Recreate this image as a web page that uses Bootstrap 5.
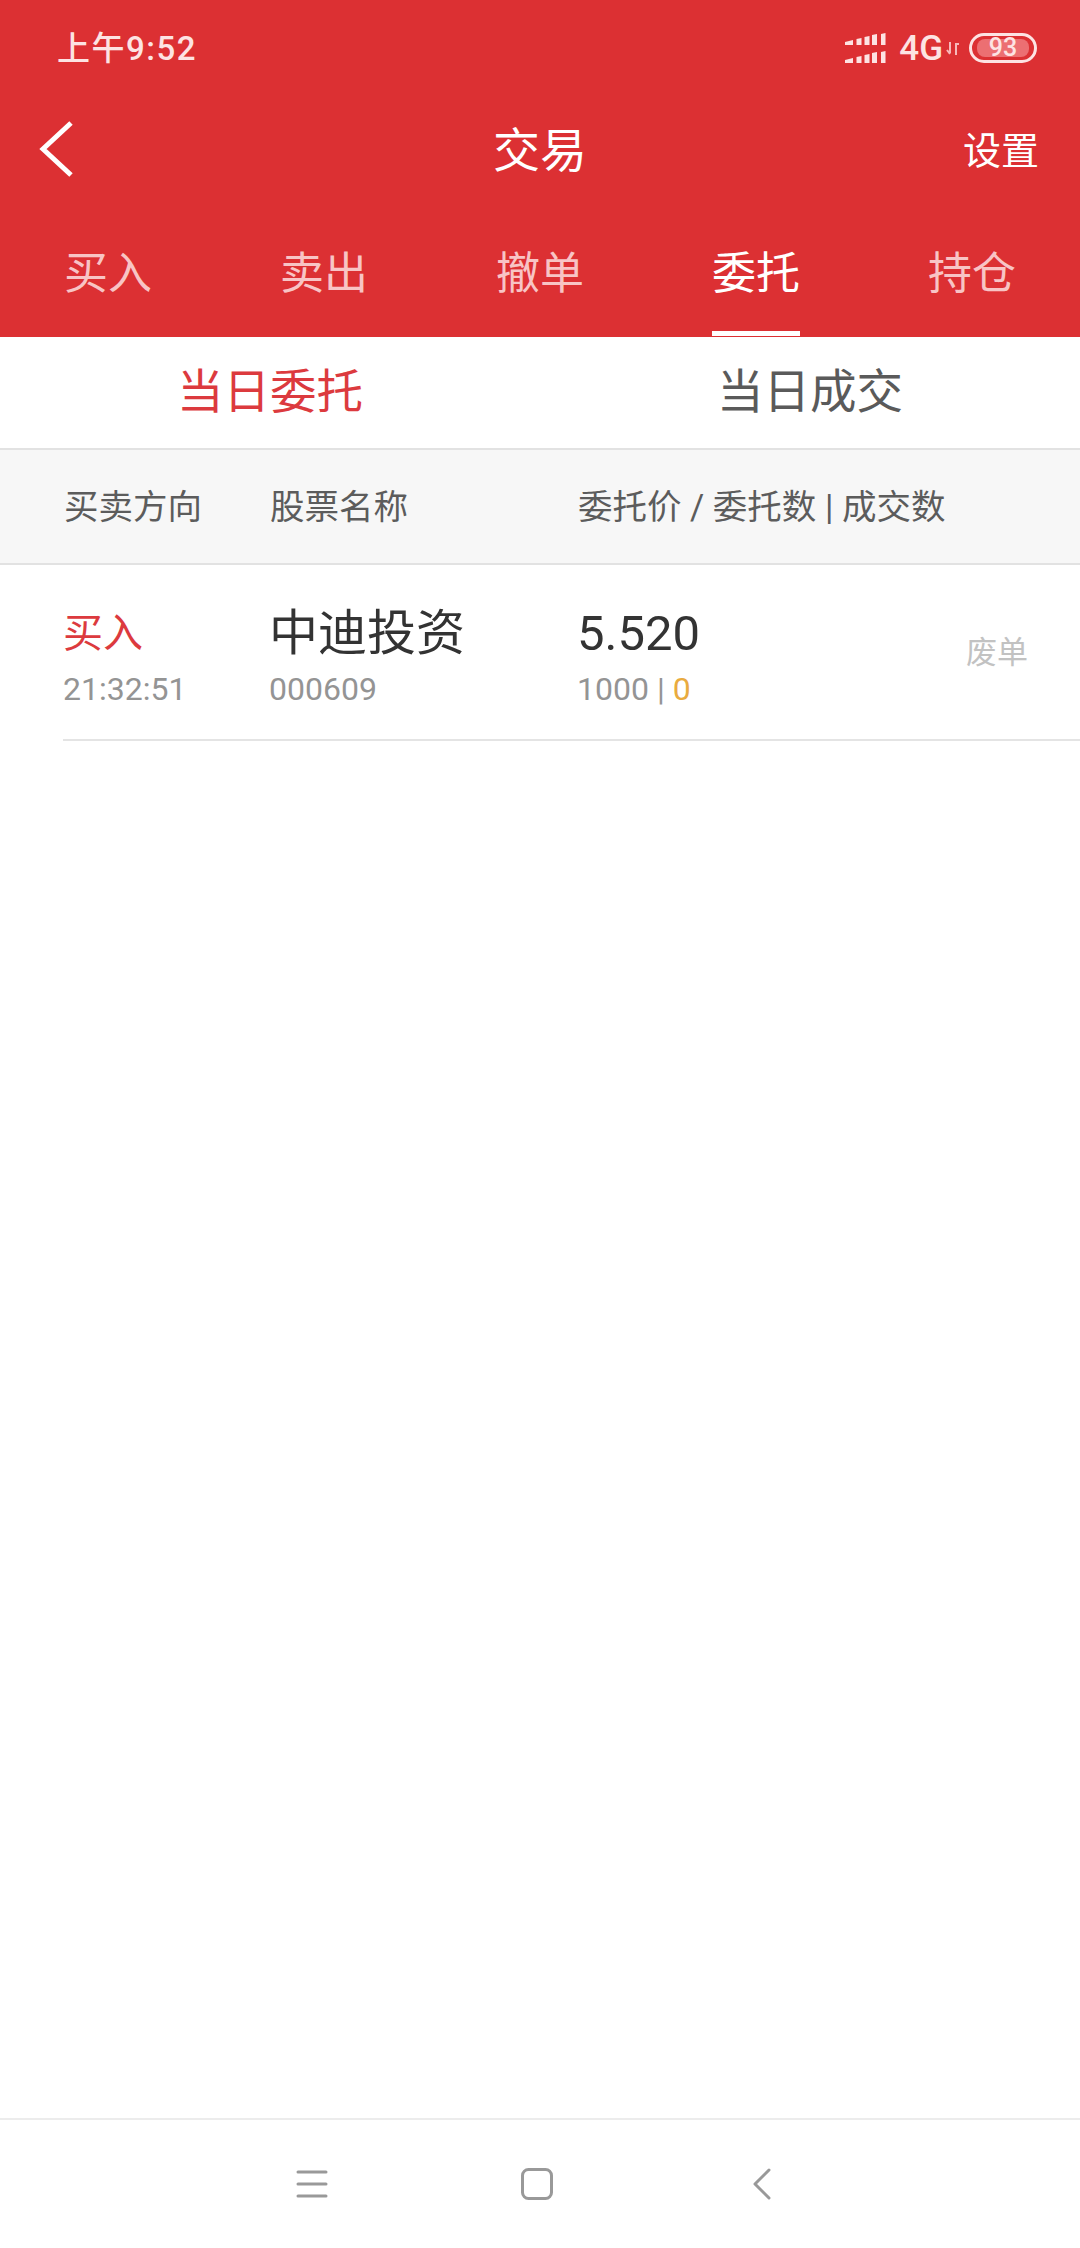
<!DOCTYPE html>
<html lang="zh-CN">
<head>
    <meta charset="UTF-8">
    <meta name="viewport" content="width=device-width, initial-scale=1.0">
    <title>交易</title>
    <link href="https://cdn.jsdelivr.net/npm/bootstrap@5.3.0/dist/css/bootstrap.min.css" rel="stylesheet">
    <style>
        body {
            font-family: Roboto, "Noto Sans CJK SC", sans-serif;
            background-color: #fff;
        }
        .app-page {
            height: 2248px;
        }
        .top-red {
            background-color: #dc3033;
            color: #fff;
            height: 337px;
        }
        .status-bar {
            height: 96px;
            padding: 0 43px 0 57px;
            color: #fde3e3;
        }
        .status-time {
            font-size: 33px;
            font-weight: 500;
            line-height: 1;
            letter-spacing: 1.5px;
        }
        .status-net {
            font-size: 35px;
            font-weight: 500;
            line-height: 1;
            margin: 0 3px 0 12px;
        }
        .battery-box {
            width: 68px;
            height: 30px;
            border: 3px solid #fde3e3;
            border-radius: 15px;
            padding: 3px 5px;
            margin-left: 9px;
        }
        .battery-fill {
            background-color: #ec6f72;
            border-radius: 8px;
            font-size: 25px;
            font-weight: 500;
            line-height: 18px;
            height: 18px;
        }
        .title-bar {
            height: 105px;
            padding: 4px 41px 0;
        }
        .back-icon {
            left: 39px;
            top: 25px;
        }
        .title-text {
            font-size: 47px;
            line-height: 1;
        }
        .setting-text {
            font-size: 38px;
            line-height: 1;
            right: 41px;
        }
        .trade-tabs .nav-link {
            height: 136px;
            padding: 0;
            font-size: 44px;
            line-height: 1;
            color: #f8c4c5;
        }
        .trade-tabs .nav-link span {
            display: inline-block;
            height: 135px;
            padding-top: 51px;
        }
        .trade-tabs .nav-link.active {
            color: #fff;
        }
        .trade-tabs .nav-link.active span {
            border-bottom: 5px solid #fff;
        }
        .sub-tabs {
            height: 113px;
            font-size: 46.5px;
            line-height: 1;
            color: #5a5a5a;
            border-bottom: 2px solid #e2e2e2;
        }
        .sub-tabs .on {
            color: #dc3a3e;
        }
        .head-row {
            height: 115px;
            background-color: #f7f7f7;
            border-bottom: 2px solid #e2e2e2;
            padding-left: 64px;
            padding-top: 2px;
            font-size: 34.5px;
            line-height: 1;
            color: #5c5c5c;
        }
        .col-side {
            width: 206px;
            flex: none;
        }
        .col-name {
            width: 308px;
            flex: none;
        }
        .order-row {
            height: 176px;
            margin-left: 63px;
            border-bottom: 2px solid #e4e4e4;
            padding-right: 52px;
            padding-top: 6px;
        }
        .side-text {
            font-size: 40px;
            line-height: 1;
            color: #dc3a3e;
            height: 55px;
            padding-top: 8px;
        }
        .name-text {
            font-size: 49px;
            line-height: 1;
            color: #333;
            height: 55px;
            padding-top: 3px;
        }
        .price-text {
            font-size: 49px;
            line-height: 1;
            color: #333;
            height: 55px;
            padding-top: 3px;
        }
        .sub-text {
            font-size: 32px;
            line-height: 1;
            color: #949494;
            margin-top: 12px;
        }
        .deal-zero {
            color: #e9ab3f;
        }
        .state-text {
            font-size: 31px;
            line-height: 1;
            color: #c2c2c2;
            margin-bottom: 6px;
        }
        .sys-bar {
            height: 130px;
            border-top: 2px solid #ececec;
            padding-right: 6px;
        }
        .sys-slot {
            width: 225px;
        }
    </style>
</head>
<body>
    <div class="app-page d-flex flex-column">
        <div class="top-red">
            <div class="status-bar d-flex align-items-center justify-content-between">
                <div class="status-time">上午9:52</div>
                <div class="d-flex align-items-center">
                    <svg width="42" height="31" viewBox="0 0 42 31" fill="#fde3e3">
                        <path id="signalRow" d="M0 9l8-2v5H0zM11.5 6l5-1v7h-5zM19.5 4l5-1v9h-5zM27 2l5-1v11h-5zM36 1l4.5-1v12H36z"/>
                        <path d="M0 27l8-2v5H0zM11.5 24l5-1v7h-5zM19.5 22l5-1v9h-5zM27 20l5-1v11h-5zM36 19l4.5-1v12H36z"/>
                    </svg>
                    <span class="status-net">4G</span>
                    <svg width="14" height="13" viewBox="0 0 14 13" fill="none" stroke="#f7b9ba" stroke-width="2">
                        <path d="M4 0v11M1 8l3 4M10 13V2h3"/>
                    </svg>
                    <div class="battery-box">
                        <div class="battery-fill text-center">93</div>
                    </div>
                </div>
            </div>
            <div class="title-bar d-flex align-items-center justify-content-center position-relative">
                <svg class="back-icon position-absolute" width="36" height="56" viewBox="0 0 36 56" fill="none" stroke="#fff" stroke-width="5">
                    <path d="M32 2L4 28l28 26"/>
                </svg>
                <div class="title-text">交易</div>
                <div class="setting-text position-absolute">设置</div>
            </div>
            <nav class="nav nav-fill trade-tabs">
                <a class="nav-link" href="#"><span>买入</span></a>
                <a class="nav-link" href="#"><span>卖出</span></a>
                <a class="nav-link" href="#"><span>撤单</span></a>
                <a class="nav-link active" href="#"><span>委托</span></a>
                <a class="nav-link" href="#"><span>持仓</span></a>
            </nav>
        </div>

        <div class="sub-tabs row g-0 text-center align-items-center">
            <div class="col-6 on">当日委托</div>
            <div class="col-6">当日成交</div>
        </div>

        <div class="head-row d-flex align-items-center">
            <div class="col-side">买卖方向</div>
            <div class="col-name">股票名称</div>
            <div class="flex-grow-1">委托价 / 委托数 | 成交数</div>
        </div>

        <div class="flex-grow-1">
            <div class="order-row d-flex align-items-center">
                <div class="col-side">
                    <div class="side-text">买入</div>
                    <div class="sub-text">21:32:51</div>
                </div>
                <div class="col-name">
                    <div class="name-text">中迪投资</div>
                    <div class="sub-text">000609</div>
                </div>
                <div class="flex-grow-1">
                    <div class="price-text">5.520</div>
                    <div class="sub-text">1000 | <span class="deal-zero">0</span></div>
                </div>
                <div class="state-text">废单</div>
            </div>
        </div>

        <div class="sys-bar d-flex align-items-center justify-content-center">
            <div class="sys-slot text-center">
                <svg width="32" height="28" viewBox="0 0 32 28" fill="none" stroke="#999" stroke-width="3" stroke-linecap="round">
                    <path d="M2 2h28M2 14h28M2 26h28"/>
                </svg>
            </div>
            <div class="sys-slot text-center">
                <svg width="32" height="32" viewBox="0 0 32 32" fill="none" stroke="#999" stroke-width="3">
                    <rect x="1.5" y="1.5" width="29" height="29" rx="6"/>
                </svg>
            </div>
            <div class="sys-slot text-center">
                <svg width="18" height="32" viewBox="0 0 18 32" fill="none" stroke="#999" stroke-width="3" stroke-linecap="round" stroke-linejoin="round">
                    <path d="M16 2L2 16l14 14"/>
                </svg>
            </div>
        </div>
    </div>
    <script src="https://cdn.jsdelivr.net/npm/bootstrap@5.3.0/dist/js/bootstrap.bundle.min.js"></script>
</body>
</html>
